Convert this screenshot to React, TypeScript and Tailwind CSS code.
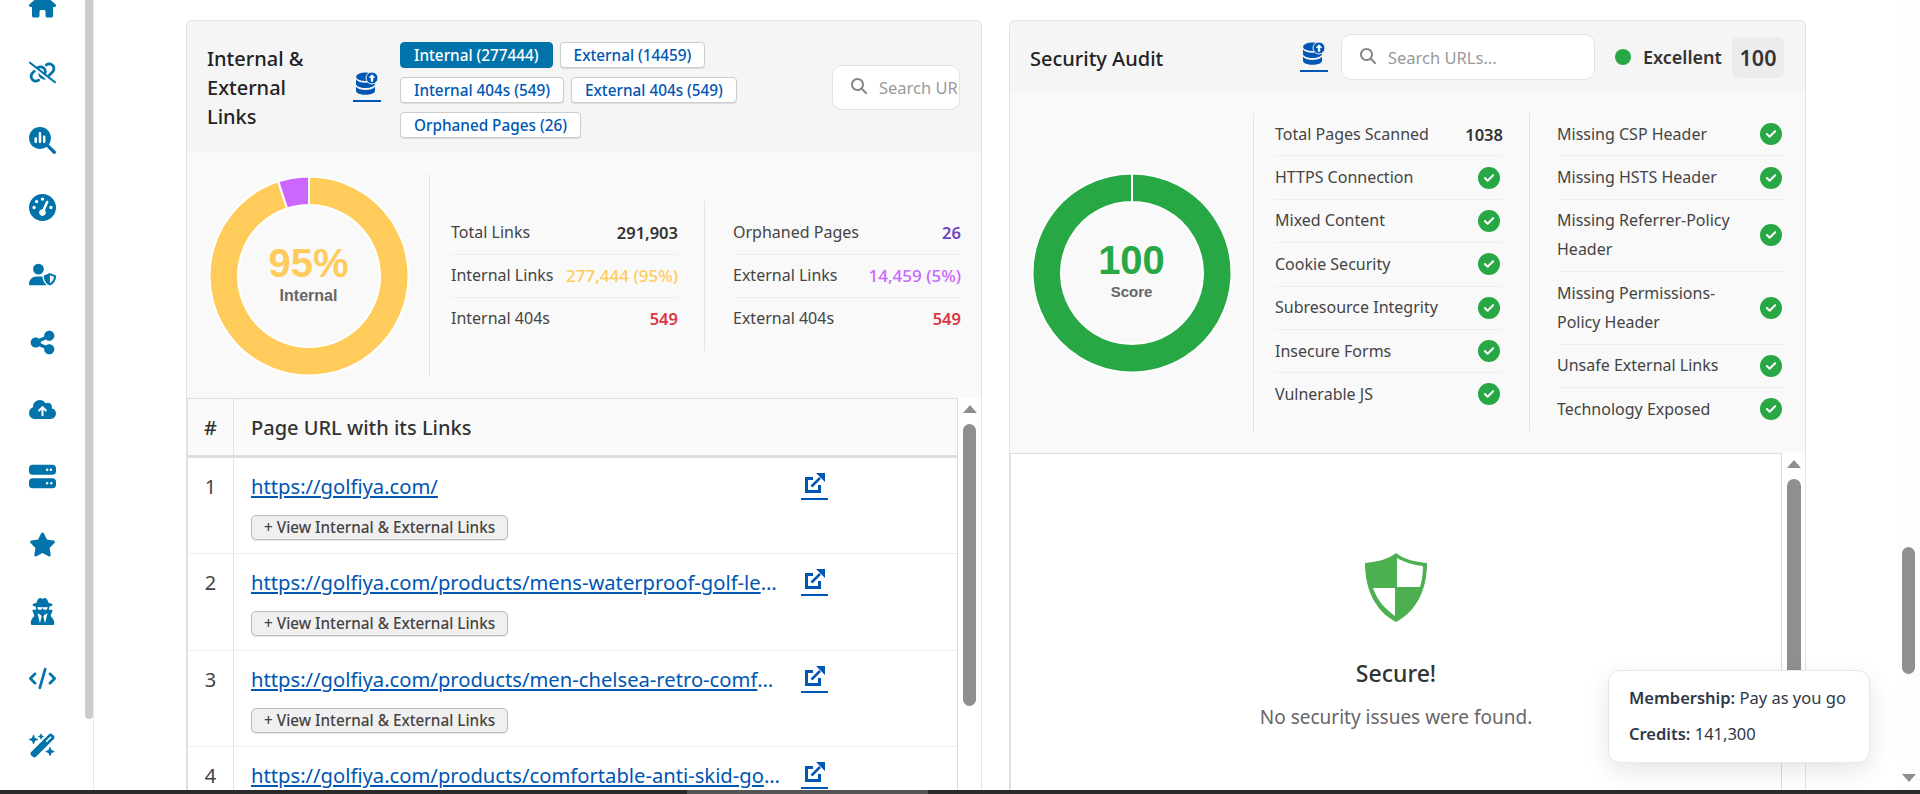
import {
  FaCircleCheck,
  FaCloudArrowUp,
  FaCode,
  FaGaugeHigh,
  FaHouse,
  FaLinkSlash,
  FaMagnifyingGlass,
  FaMagnifyingGlassChart,
  FaServer,
  FaShareNodes,
  FaStar,
  FaUserSecret,
  FaUserShield,
  FaWandMagicSparkles,
} from "react-icons/fa6";

const navIcons = [
  FaHouse,
  FaLinkSlash,
  FaMagnifyingGlassChart,
  FaGaugeHigh,
  FaUserShield,
  FaShareNodes,
  FaCloudArrowUp,
  FaServer,
  FaStar,
  FaUserSecret,
  FaCode,
  FaWandMagicSparkles,
];

const pillRows = [
  ["Internal (277444)", "External (14459)"],
  ["Internal 404s (549)", "External 404s (549)"],
  ["Orphaned Pages (26)"],
];

const linkRows = [
  "https://golfiya.com/",
  "https://golfiya.com/products/mens-waterproof-golf-leather-spikeless-shoes",
  "https://golfiya.com/products/men-chelsea-retro-comfortable-leather-boots",
  "https://golfiya.com/products/comfortable-anti-skid-golf-shoes-for-men",
];

const leftStats = [
  { label: "Total Links", value: "291,903", color: "text-[16.5px] text-[#333] font-semibold" },
  { label: "Internal Links", value: "277,444 (95%)", color: "text-[17px] text-[#ffcc5c] font-medium" },
  { label: "Internal 404s", value: "549", color: "text-[16.5px] text-[#dc3545] font-semibold" },
];

const rightStats = [
  { label: "Orphaned Pages", value: "26", color: "text-[16.5px] text-[#6f42c1] font-semibold" },
  { label: "External Links", value: "14,459 (5%)", color: "text-[17px] text-[#cc66ff] font-medium" },
  { label: "External 404s", value: "549", color: "text-[16.5px] text-[#dc3545] font-semibold" },
];

const auditLeft = [
  "HTTPS Connection",
  "Mixed Content",
  "Cookie Security",
  "Subresource Integrity",
  "Insecure Forms",
  "Vulnerable JS",
];

const auditRight = [
  "Missing CSP Header",
  "Missing HSTS Header",
  "Missing Referrer-Policy Header",
  "Missing Permissions-Policy Header",
  "Unsafe External Links",
  "Technology Exposed",
];

function sector(start: number, end: number, outer: number, inner: number) {
  const pt = (deg: number, r: number) => {
    const a = ((deg - 90) * Math.PI) / 180;
    return `${100 + r * Math.cos(a)} ${100 + r * Math.sin(a)}`;
  };
  const large = end - start > 180 ? 1 : 0;
  return `M${pt(start, outer)} A${outer} ${outer} 0 ${large} 1 ${pt(end, outer)} L${pt(end, inner)} A${inner} ${inner} 0 ${large} 0 ${pt(start, inner)} Z`;
}

function DbIcon() {
  return (
    <span className="block w-[28px] shrink-0 border-b-2 border-[#0056b3] pb-[5px]">
      <svg viewBox="0 0 22 23" className="mx-auto block h-[23px] w-[22px]">
        <ellipse cx="9.500" cy="4.800" rx="9.500" ry="4.300" fill="#0056b3" />
        <path d="M0 7.500c1.800 2.200 5.500 3.200 9.500 3.200s7.700-1 9.500-3.200v4.500c0 2.300-4.200 4-9.500 4S0 14.300 0 12z" fill="#0056b3" />
        <path d="M0 14.700c1.800 2.200 5.500 3.200 9.500 3.200s7.700-1 9.500-3.200v4c0 2.400-4.200 4-9.500 4S0 21.100 0 18.700z" fill="#0056b3" />
        <circle cx="16" cy="6" r="6" fill="#0056b3" stroke="#f5f5f5" strokeWidth="1" />
        <path d="M16 2.200l3.400 3.600h-2.200v3.900h-2.400V5.800h-2.200z" fill="#fff" />
      </svg>
    </span>
  );
}

function ExternalIcon() {
  return (
    <svg viewBox="0 0 20 20" className="mx-auto block h-[20px] w-[20px]" fill="none">
      <path d="M8 5.500H1.500V18.500H14.500V12" stroke="#0056b3" strokeWidth="3" />
      <path d="M6.500 13.500L15 5" stroke="#0056b3" strokeWidth="2.500" />
      <polygon points="11,0 20,0 20,9" fill="#0056b3" />
    </svg>
  );
}

function Search({ text, className }: { text: string; className: string }) {
  return (
    <div className={`flex shrink-0 items-center overflow-hidden rounded-[10px] border border-[#e2e2e2] bg-white ${className}`}>
      <FaMagnifyingGlass className="-mt-[3px] h-[16px] w-[16px] shrink-0 text-[#888]" />
      <span className="ml-[12px] whitespace-nowrap text-[16.5px] text-[#999]">{text}</span>
    </div>
  );
}

function ArrowUp() {
  return (
    <svg viewBox="0 0 14 8" className="h-[8px] w-[14px] shrink-0">
      <polygon points="7,0 14,8 0,8" fill="#8f8f8f" />
    </svg>
  );
}

function StatRow({ label, value, color }: { label: string; value: string; color: string }) {
  return (
    <div className="flex items-center justify-between border-b border-[#eee] py-[6.5px] last:border-0">
      <span className="whitespace-nowrap text-[#444]">{label}</span>
      <span className={`whitespace-nowrap ${color}`}>{value}</span>
    </div>
  );
}

function CheckRow({ label, last, iconClass }: { label: string; last?: boolean; iconClass: string }) {
  return (
    <div className={`flex items-center justify-between gap-[10px] py-[6.7px] ${last ? "" : "border-b border-[#eee]"}`}>
      <span className="text-[#444]">{label}</span>
      <FaCircleCheck className={`h-[22px] w-[22px] shrink-0 text-[#28a745] ${iconClass}`} />
    </div>
  );
}

export default function App() {
  return (
    <div className="flex h-[794px] w-[1920px] flex-col overflow-hidden bg-white font-['Noto_Sans',sans-serif] text-[16px] leading-[29px]">
      <div className="flex h-[790px] shrink-0 overflow-hidden">
        {/* Sidebar */}
        <aside className="flex w-[94px] shrink-0 border-r border-[#e8e8e8]">
          <nav className="-mt-[28px] w-[85px] shrink-0">
            {navIcons.map((Icon, i) => (
              <div key={i} className="flex h-[67.3px] items-center justify-center">
                <Icon className="h-[27px] w-auto text-[#0073aa]" />
              </div>
            ))}
          </nav>
          <div className="h-[719px] w-[8px] rounded-b-[4px] bg-[#ccc]" />
        </aside>

        {/* Panels */}
        <main className="flex min-w-0 flex-1 gap-[27px] pl-[92px] pt-[20px]">
          <section className="flex h-[770px] w-[796px] shrink-0 flex-col overflow-hidden rounded-t-[6px] border border-b-0 border-[#e3e3e3] bg-[#f9f9f9]">
            <header className="flex h-[132px] shrink-0 items-center bg-[#f5f5f5] pl-[20px] pr-[21px]">
              <h2 className="mt-[1px] w-[146px] shrink-0 text-[20px] font-medium leading-[29px] text-[#222]">
                Internal &amp;<br />External<br />Links
              </h2>
              <DbIcon />
              <div className="ml-[19px] mt-[5px] flex flex-1 flex-col gap-[9px]">
                {pillRows.map((row, i) => (
                  <div key={i} className="flex gap-[7px]">
                    {row.map((p) => (
                      <span
                        key={p}
                        className={
                          p.startsWith("Internal (")
                            ? "rounded-[4px] border border-[#0073aa] bg-[#0073aa] px-[13px] text-[15.3px] font-medium leading-[24px] text-white"
                            : "rounded-[4px] border border-[#ccc] bg-white px-[13px] text-[15.3px] font-medium leading-[24px] text-[#0056b3] shadow-[0_1px_1px_rgba(0,0,0,0.1)]"
                        }
                      >
                        {p}
                      </span>
                    ))}
                  </div>
                ))}
              </div>
              <Search text="Search URLs..." className="h-[45px] w-[128px] pl-[18px]" />
            </header>

            <div className="flex h-[245px] shrink-0 py-[21px]">
              <div className="flex w-[243px] shrink-0 items-center justify-center border-r border-[#e3e3e3]">
                <div className="relative ml-[1px] h-[200px] w-[200px]">
                  <svg viewBox="0 0 200 200" className="h-full w-full">
                    <path d={sector(0, 342, 99.500, 71)} fill="#ffcc5c" stroke="#fff" strokeWidth="2" />
                    <path d={sector(342, 360, 99.500, 71)} fill="#cc66ff" stroke="#fff" strokeWidth="2" />
                  </svg>
                  <div className="absolute inset-0 flex flex-col items-center justify-center font-['Liberation_Sans',sans-serif]">
                    <span className="text-[40px] font-bold leading-[40px] text-[#ffcc5c]">95%</span>
                    <span className="text-[16px] font-bold leading-[26px] text-[#666]">Internal</span>
                  </div>
                </div>
              </div>
              <div className="flex flex-1 items-center pl-[21px]">
                <div className="w-[227px] shrink-0">
                  {leftStats.map((s) => (
                    <StatRow key={s.label} {...s} />
                  ))}
                </div>
                <div className="ml-[26px] mr-[28px] h-[150px] w-px shrink-0 bg-[#e3e3e3]" />
                <div className="w-[228px] shrink-0">
                  {rightStats.map((s) => (
                    <StatRow key={s.label} {...s} />
                  ))}
                </div>
              </div>
            </div>

            <div className="flex min-h-0 flex-1 bg-white">
              <div className="w-[771px] shrink-0 border-x border-t border-[#ddd]">
                <div className="flex h-[59px] border-b-[3px] border-[#ddd] bg-[#fafafa] text-[20px] font-medium text-[#333]">
                  <div className="flex w-[46px] shrink-0 items-center justify-center border-r border-[#e3e3e3]">#</div>
                  <div className="flex items-center pl-[17px]">Page URL with its Links</div>
                </div>
                {linkRows.map((url, i) => (
                  <div key={url} className="flex h-[96.300px] border-b border-[#eee]">
                    <div className="w-[46px] shrink-0 border-r border-[#e3e3e3] pt-[14px] text-center text-[20px] text-[#444]">
                      {i + 1}
                    </div>
                    <div className="min-w-0 flex-1 pl-[17px] pt-[14px]">
                      <div className="flex items-start">
                        <a className="block w-[530px] truncate text-[20.2px] text-[#0056b3] underline">{url}</a>
                        <span className="ml-[20px] mt-[1px] block w-[27px] border-b-2 border-[#0056b3] pb-[5px]">
                          <ExternalIcon />
                        </span>
                      </div>
                      <button className="mt-[14px] block rounded-[5px] border border-[#bbb] bg-[#f0f0f0] px-[12px] text-[15.3px] font-medium leading-[23px] text-[#444] shadow-[0_1px_1px_rgba(0,0,0,0.1)]">
                        + View Internal &amp; External Links
                      </button>
                    </div>
                  </div>
                ))}
              </div>
              <div className="flex w-[23px] shrink-0 flex-col items-center pt-[7px]">
                <ArrowUp />
                <div className="mt-[11px] h-[282px] w-[13px] rounded-full bg-[#8f8f8f]" />
              </div>
            </div>
          </section>

          <section className="flex h-[770px] w-[797px] shrink-0 flex-col overflow-hidden rounded-t-[6px] border border-b-0 border-[#e3e3e3] bg-[#f9f9f9]">
            <header className="flex h-[72px] shrink-0 items-center bg-[#f5f5f5] pl-[20px] pr-[21px]">
              <h2 className="mt-[2px] flex-1 text-[20px] font-medium text-[#222]">Security Audit</h2>
              <DbIcon />
              <Search text="Search URLs..." className="ml-[13px] h-[46px] w-[254px] pl-[18px]" />
              <span className="ml-[20px] h-[16px] w-[16px] shrink-0 rounded-full bg-[#28a745]" />
              <span className="ml-[12px] w-[79px] shrink-0 whitespace-nowrap text-[18px] font-semibold text-[#333]">Excellent</span>
              <span className="ml-[10px] flex h-[41px] w-[52px] shrink-0 items-center justify-center rounded-[6px] bg-[#ececec] text-[21.5px] font-semibold text-[#333]">
                100
              </span>
            </header>

            <div className="flex h-[360px] shrink-0 py-[20px]">
              <div className="flex w-[244px] shrink-0 items-center justify-center border-r border-[#e3e3e3]">
                <div className="relative h-[200px] w-[200px]">
                  <svg viewBox="0 0 200 200" className="h-full w-full">
                    <path d={sector(0, 359.990, 99.500, 71)} fill="#28a745" stroke="#fff" strokeWidth="2" />
                  </svg>
                  <div className="absolute inset-0 flex flex-col items-center justify-center font-['Liberation_Sans',sans-serif]">
                    <span className="text-[40px] font-bold leading-[36px] text-[#28a745]">100</span>
                    <span className="text-[15px] font-bold leading-[27px] text-[#666]">Score</span>
                  </div>
                </div>
              </div>
              <div className="flex flex-1 items-start">
                <div className="ml-[21px] w-[228px] shrink-0">
                  <div className="flex items-center justify-between border-b border-[#eee] py-[6.7px]">
                    <span className="text-[#444]">Total Pages Scanned</span>
                    <span className="text-[16.5px] font-semibold text-[#333]">1038</span>
                  </div>
                  {auditLeft.map((l, i) => (
                    <CheckRow key={l} label={l} last={i === auditLeft.length - 1} iconClass="mr-[3px]" />
                  ))}
                </div>
                <div className="ml-[26px] h-[318px] w-px shrink-0 bg-[#e3e3e3]" />
                <div className="ml-[27px] w-[227px] shrink-0">
                  {auditRight.map((l, i) => (
                    <CheckRow key={l} label={l} last={i === auditRight.length - 1} iconClass="mr-[2px]" />
                  ))}
                </div>
              </div>
            </div>

            <div className="flex min-h-0 flex-1 bg-white">
              <div className="flex w-[772px] shrink-0 flex-col items-center border-x border-t border-[#ddd] pt-[99px]">
                <svg viewBox="0 0 62 69" className="h-[69px] w-[62px]">
                  <path d="M31 0C38 6 50 9 62 10C62 36 52 58 31 69C10 58 0 36 0 10C12 9 24 6 31 0Z" fill="#4caf50" />
                  <path d="M32 5C39 9 48 12 58 13C58 21 57 28 55 34H32Z" fill="#fff" />
                  <path d="M8 35H30V63C20 56 12 47 8 35Z" fill="#fff" />
                </svg>
                <h3 className="mt-[37px] text-[23px] font-medium text-[#333]">Secure!</h3>
                <p className="mt-[15px] text-[19px] text-[#666]">No security issues were found.</p>
              </div>
              <div className="flex w-[23px] shrink-0 flex-col items-center pt-[7px]">
                <ArrowUp />
                <div className="mt-[11px] h-[232px] w-[14px] rounded-full bg-[#8f8f8f]" />
              </div>
            </div>
          </section>
        </main>

        {/* Page scrollbar */}
        <div className="relative flex w-[23px] shrink-0 flex-col items-center bg-[#fdfdfd] pt-[547px]">
          <div className="h-[127px] w-[13px] rounded-full bg-[#8f8f8f]" />
          <svg viewBox="0 0 14 8" className="mt-[100px] h-[8px] w-[14px]">
            <polygon points="0,0 14,0 7,8" fill="#8f8f8f" />
          </svg>
        </div>
      </div>

      {/* Membership popover */}
      <div className="absolute left-[1608px] top-[670px] h-[93px] w-[262px] rounded-[12px] border border-[#e5e7eb] bg-white pl-[20px] pt-[9px] text-[16.5px] leading-[36px] text-[#2d3748] shadow-[0_8px_24px_rgba(0,0,0,0.1)]">
        <div className="whitespace-nowrap"><b className="font-semibold">Membership:</b> Pay as you go</div>
        <div className="whitespace-nowrap"><b className="font-semibold">Credits:</b> 141,300</div>
      </div>

      {/* Bottom scrollbar strip */}
      <div className="flex h-[4px] shrink-0 bg-[#2a2a2a]">
        <div className="ml-[687px] h-full w-[241px] bg-[#555]" />
      </div>
    </div>
  );
}
